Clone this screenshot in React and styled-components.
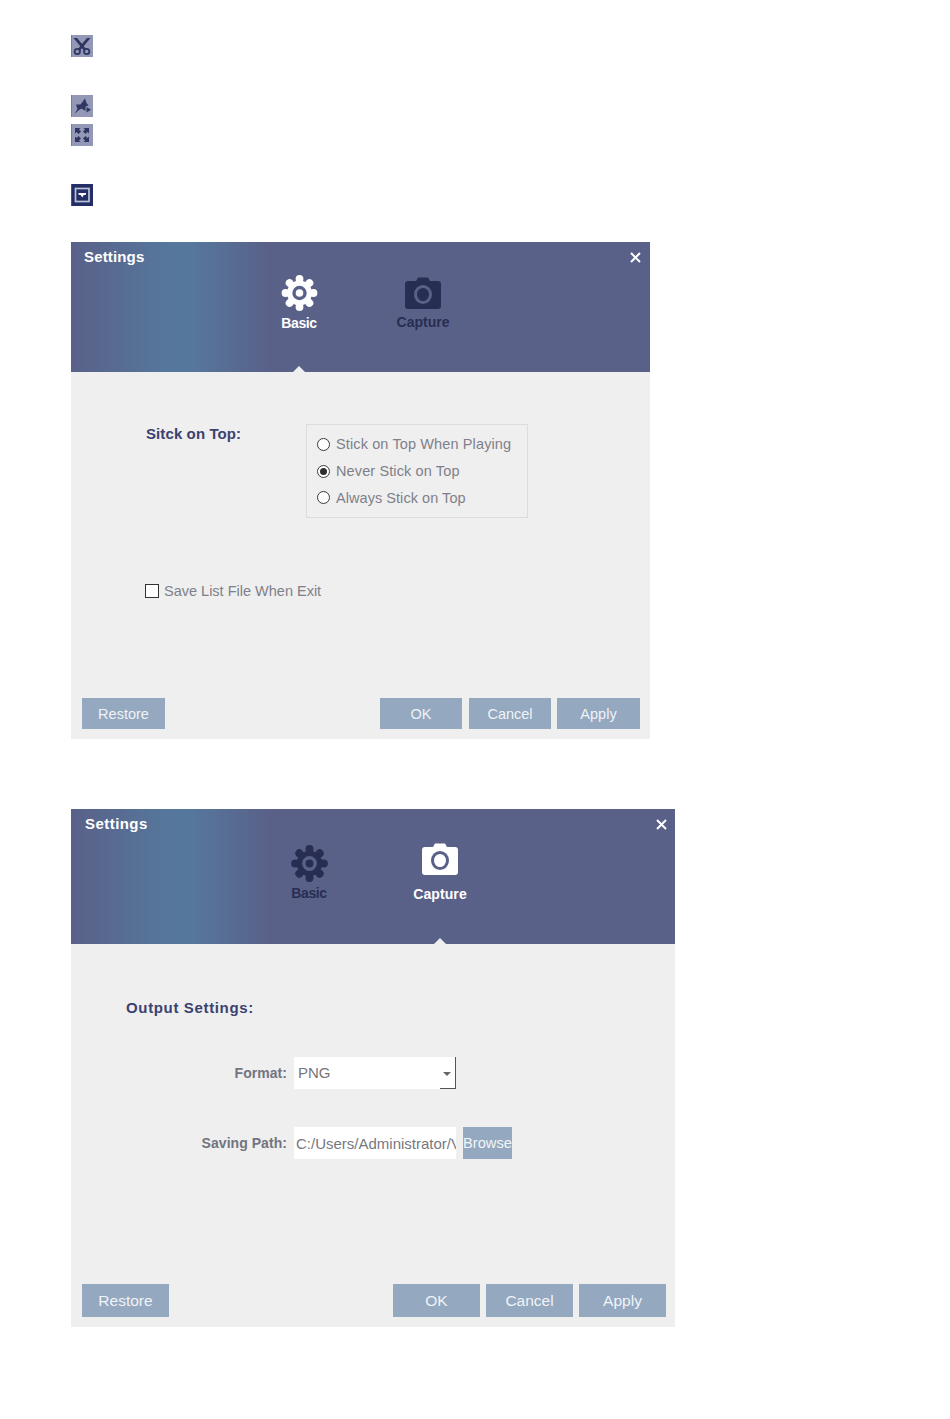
import React from 'react';
import styled, { createGlobalStyle } from 'styled-components';

const GlobalStyle = createGlobalStyle`
  html, body {
    margin: 0;
    padding: 0;
    background: #ffffff;
    font-family: "Liberation Sans", Arial, sans-serif;
  }
`;

const Page = styled.div`
  width: 950px;
  height: 1419px;
  padding: 35px 0 0 71px;
  box-sizing: border-box;
  overflow: hidden;
`;

const IconStack = styled.div`
  display: flex;
  flex-direction: column;
  margin-bottom: 36px;
`;

const ToolIcon = styled.div`
  width: 22px;
  height: 22px;
  margin-top: ${(p) => p.$top || 0}px;
  background: ${(p) => (p.$active ? '#232e66' : '#9298b6')};
  box-shadow: inset 1px 0 0 ${(p) => (p.$active ? '#4a5380' : '#777d9e')};
  color: ${(p) => (p.$active ? '#ffffff' : '#2f3662')};
  display: flex;

  svg {
    width: 22px;
    height: 22px;
    display: block;
  }
`;

const Dialog = styled.div`
  width: ${(p) => p.$width}px;
  height: ${(p) => p.$height}px;
  background: #efefef;
  display: flex;
  flex-direction: column;
  margin-bottom: ${(p) => p.$bottom || 0}px;
`;

const Header = styled.div`
  height: ${(p) => p.$height}px;
  flex: none;
  display: flex;
  flex-direction: column;
  background: linear-gradient(90deg, #596189 0px, #56779c 98px, #56779c 120px, #596189 198px, #596189 100%);
`;

const TitleRow = styled.div`
  height: 30px;
  flex: none;
  display: flex;
  align-items: center;
  justify-content: space-between;
  padding: 0 ${(p) => p.$right}px 2px ${(p) => p.$left}px;
  box-sizing: border-box;
`;

const Title = styled.div`
  color: #ffffff;
  font-size: 15px;
  font-weight: 700;
  letter-spacing: ${(p) => p.$spacing || 0}px;
`;

const CloseIcon = styled.svg`
  width: 11px;
  height: 11px;
  display: block;
  margin-top: 3px;
`;

const TabRow = styled.div`
  flex: 1;
  display: flex;
  gap: ${(p) => p.$gap}px;
  padding-left: ${(p) => p.$left}px;
`;

const Tab = styled.div`
  width: 100px;
  position: relative;
  display: flex;
  flex-direction: column;
  align-items: center;
  color: ${(p) => (p.$active ? '#ffffff' : '#282d52')};
`;

const TabIcon = styled.svg`
  display: block;
  width: ${(p) => p.$w}px;
  height: ${(p) => p.$h}px;
  margin-top: ${(p) => p.$top}px;
`;

const TabLabel = styled.div`
  margin-top: ${(p) => p.$gap}px;
  font-size: 14px;
  line-height: 16px;
  font-weight: 700;
  letter-spacing: ${(p) => p.$spacing || 0}px;
`;

const Caret = styled.div`
  position: absolute;
  bottom: 0;
  left: 50%;
  margin-left: -6px;
  width: 0;
  height: 0;
  border-left: 6px solid transparent;
  border-right: 6px solid transparent;
  border-bottom: 6px solid #efefef;
`;

const Body = styled.div`
  flex: 1;
  display: flex;
  flex-direction: column;
`;

const StickRow = styled.div`
  display: flex;
  padding: 52px 0 0 75px;
`;

const SectionLabel = styled.div`
  color: #3b4270;
  font-size: 15px;
  line-height: 18px;
  font-weight: 700;
  letter-spacing: 0.1px;
`;

const StickLabel = styled(SectionLabel)`
  width: 160px;
  flex: none;
  padding-top: 1px;
`;

const RadioGroup = styled.div`
  width: 222px;
  height: 94px;
  box-sizing: border-box;
  border: 1px solid #dcdcdc;
  padding: 6px 10px;
  display: flex;
  flex-direction: column;
`;

const OptionRow = styled.div`
  display: flex;
  align-items: center;
  height: 27px;
  gap: 6px;
  color: #80808a;
  font-size: 14.5px;
  letter-spacing: ${(p) => p.$spacing || 0}px;
`;

const RadioMark = styled.span`
  width: 13px;
  height: 13px;
  box-sizing: border-box;
  border: 1px solid #3a3a3a;
  border-radius: 50%;
  background: #ffffff;
  display: flex;
  align-items: center;
  justify-content: center;
  flex: none;

  &::after {
    content: '';
    display: ${(p) => (p.$on ? 'block' : 'none')};
    width: 7px;
    height: 7px;
    border-radius: 50%;
    background: #2e2e2e;
  }
`;

const CheckRow = styled(OptionRow)`
  margin: 59px 0 0 74px;
`;

const CheckMark = styled.span`
  width: 14px;
  height: 14px;
  box-sizing: border-box;
  border: 1px solid #333333;
  background: #ffffff;
  flex: none;
  margin-right: -1px;
`;

const OutputHead = styled(SectionLabel)`
  margin: 55px 0 0 55px;
  letter-spacing: 0.65px;
`;

const FieldRow = styled.div`
  display: grid;
  grid-template-columns: 216px 162px auto;
  column-gap: 7px;
  align-items: center;
  margin-top: ${(p) => p.$top}px;
`;

const FieldLabel = styled.div`
  text-align: right;
  color: #73747f;
  font-size: 14px;
  font-weight: 700;
  letter-spacing: 0.05px;
`;

const SelectBox = styled.div`
  height: 32px;
  box-sizing: border-box;
  background: #ffffff;
  position: relative;
  display: flex;
  align-items: center;
  padding: 0 0 1px 4px;
  color: #77747a;
  font-size: 15px;

  &::before {
    content: '';
    position: absolute;
    right: 0;
    bottom: 0;
    width: 16px;
    height: 32px;
    box-sizing: border-box;
    border-right: 1px solid #555555;
    border-bottom: 1px solid #555555;
  }

  &::after {
    content: '';
    position: absolute;
    right: 5px;
    top: 15px;
    border-left: 4px solid transparent;
    border-right: 4px solid transparent;
    border-top: 4px solid #666666;
  }
`;

const PathInput = styled.div`
  height: 32px;
  box-sizing: border-box;
  background: #ffffff;
  display: flex;
  align-items: center;
  padding-left: 2px;
  color: #77777f;
  font-size: 15px;
  white-space: nowrap;
  overflow: hidden;
`;

const BrowseButton = styled.div`
  width: 49px;
  height: 32px;
  background: #94a8c0;
  color: #f2f5f8;
  font-size: 14.7px;
  display: flex;
  align-items: center;
  justify-content: center;
`;

const Footer = styled.div`
  margin-top: auto;
  display: flex;
  align-items: center;
  padding: 0 ${(p) => p.$right}px 10px 11px;
  gap: 6px;
`;

const ActionButton = styled.div`
  width: ${(p) => p.$width}px;
  height: ${(p) => p.$height}px;
  background: #94a8c0;
  color: #f0f3f7;
  font-size: ${(p) => p.$font}px;
  display: flex;
  align-items: center;
  justify-content: center;
  margin-right: ${(p) => (p.$push ? 'auto' : `${p.$after || 0}px`)};
`;

function Scissors() {
  return (
    <svg viewBox="0 0 22 22">
      <path d="M2.5 3 L6 3 L11.5 9.5 L15 14 L13 15.5 L9.5 11.5 Z" fill="currentColor" />
      <path d="M19.5 3 L16 3 L10.5 9.5 L7 14 L9 15.5 L12.5 11.5 Z" fill="currentColor" />
      <circle cx="6.3" cy="16.5" r="2.7" fill="none" stroke="currentColor" strokeWidth="1.8" />
      <circle cx="15.7" cy="16.5" r="2.7" fill="none" stroke="currentColor" strokeWidth="1.8" />
    </svg>
  );
}

function PinIcon() {
  return (
    <svg viewBox="0 0 22 22" fill="currentColor">
      <path d="M14 3.5 L15.5 8 L17.5 10.5 L14.5 11.5 L14.5 16 L10.5 13.5 L8 15 L3.5 19 L6.5 14 L5 9.5 L9.5 9.5 Z" />
      <path d="M15.5 12 L20 14.8 L15.5 17.5 Z" />
    </svg>
  );
}

function ExpandIcon() {
  return (
    <svg viewBox="0 0 22 22" fill="currentColor">
      <path d="M4 4 H9.5 L8 5.5 L10 7.5 L7.5 10 L5.5 8 L4 9.5 Z" />
      <path d="M18 4 V9.5 L16.5 8 L14.5 10 L12 7.5 L14 5.5 L12.5 4 Z" />
      <path d="M4 18 V12.5 L5.5 14 L7.5 12 L10 14.5 L8 16.5 L9.5 18 Z" />
      <path d="M18 18 H12.5 L14 16.5 L12 14.5 L14.5 12 L16.5 14 L18 12.5 Z" />
    </svg>
  );
}

function DropBoxIcon() {
  return (
    <svg viewBox="0 0 22 22" fill="none">
      <rect x="4.5" y="4.5" width="13.5" height="13" stroke="#bcc1d6" strokeWidth="1.7" />
      <path d="M7.5 9 H15 V10.8 L12.8 11 L11.2 13.5 L9.7 11 L7.5 10.8 Z" fill="#ffffff" />
    </svg>
  );
}

function Close() {
  return (
    <CloseIcon viewBox="0 0 11 11">
      <path d="M1 1 L10 10 M10 1 L1 10" stroke="#ffffff" strokeWidth="2" />
    </CloseIcon>
  );
}

const gearLobes = [0, 45, 90, 135, 180, 225, 270, 315];

function Gear({ w, h, top }) {
  return (
    <TabIcon $w={w} $h={h} $top={top} viewBox="0 0 36 36">
      {gearLobes.map((deg) => (
        <circle key={deg} cx="18" cy="4" r="3.9" fill="currentColor" transform={`rotate(${deg} 18 18)`} />
      ))}
      <circle cx="18" cy="18" r="12.5" fill="currentColor" />
      <circle cx="18" cy="18" r="7.2" fill="#596189" />
      <circle cx="18" cy="18" r="3.8" fill="currentColor" />
    </TabIcon>
  );
}

function Camera({ top }) {
  return (
    <TabIcon $w={36} $h={32} $top={top} viewBox="0 0 36 32">
      <path
        d="M11 4 L13 0.5 H23 L25 4 H33 Q36 4 36 7 V29 Q36 32 33 32 H3 Q0 32 0 29 V7 Q0 4 3 4 Z"
        fill="currentColor"
      />
      <ellipse cx="18" cy="17.5" rx="7.5" ry="8" fill="none" stroke="#596189" strokeWidth="3" />
    </TabIcon>
  );
}

function App() {
  return (
    <Page>
      <GlobalStyle />
      <IconStack>
        <ToolIcon><Scissors /></ToolIcon>
        <ToolIcon $top={38}><PinIcon /></ToolIcon>
        <ToolIcon $top={7}><ExpandIcon /></ToolIcon>
        <ToolIcon $top={38} $active><DropBoxIcon /></ToolIcon>
      </IconStack>

      <Dialog $width={579} $height={497} $bottom={70}>
        <Header $height={130}>
          <TitleRow $left={13} $right={9}>
            <Title $spacing={0.15}>Settings</Title>
            <Close />
          </TitleRow>
          <TabRow $left={178} $gap={24}>
            <Tab $active>
              <Gear w={37} h={36} top={3} />
              <TabLabel $gap={4} $spacing={-0.4}>Basic</TabLabel>
              <Caret />
            </Tab>
            <Tab>
              <Camera top={5} />
              <TabLabel $gap={5}>Capture</TabLabel>
            </Tab>
          </TabRow>
        </Header>
        <Body>
          <StickRow>
            <StickLabel>Sitck on Top:</StickLabel>
            <RadioGroup>
              <OptionRow $spacing={0.12}><RadioMark />Stick on Top When Playing</OptionRow>
              <OptionRow $spacing={0.12}><RadioMark $on />Never Stick on Top</OptionRow>
              <OptionRow $spacing={0.05}><RadioMark />Always Stick on Top</OptionRow>
            </RadioGroup>
          </StickRow>
          <CheckRow><CheckMark />Save List File When Exit</CheckRow>
          <Footer $right={10}>
            <ActionButton $width={83} $height={31} $font={14.5} $push>Restore</ActionButton>
            <ActionButton $width={82} $height={31} $font={14.5} $after={1}>OK</ActionButton>
            <ActionButton $width={82} $height={31} $font={14.5}>Cancel</ActionButton>
            <ActionButton $width={83} $height={31} $font={14.5}>Apply</ActionButton>
          </Footer>
        </Body>
      </Dialog>

      <Dialog $width={604} $height={518}>
        <Header $height={135}>
          <TitleRow $left={14} $right={8}>
            <Title $spacing={0.45}>Settings</Title>
            <Close />
          </TitleRow>
          <TabRow $left={188} $gap={31}>
            <Tab>
              <Gear w={37} h={37} top={6} />
              <TabLabel $gap={3} $spacing={-0.4}>Basic</TabLabel>
            </Tab>
            <Tab $active>
              <Camera top={4} />
              <TabLabel $gap={11} $spacing={0.1}>Capture</TabLabel>
              <Caret />
            </Tab>
          </TabRow>
        </Header>
        <Body>
          <OutputHead>Output Settings:</OutputHead>
          <FieldRow $top={40}>
            <FieldLabel>Format:</FieldLabel>
            <SelectBox>PNG</SelectBox>
          </FieldRow>
          <FieldRow $top={38}>
            <FieldLabel>Saving Path:</FieldLabel>
            <PathInput>C:/Users/Administrator/V</PathInput>
            <BrowseButton>Browse</BrowseButton>
          </FieldRow>
          <Footer $right={9}>
            <ActionButton $width={87} $height={33} $font={15.5} $push>Restore</ActionButton>
            <ActionButton $width={87} $height={33} $font={15.5}>OK</ActionButton>
            <ActionButton $width={87} $height={33} $font={15.5}>Cancel</ActionButton>
            <ActionButton $width={87} $height={33} $font={15.5}>Apply</ActionButton>
          </Footer>
        </Body>
      </Dialog>
    </Page>
  );
}

export default App;
